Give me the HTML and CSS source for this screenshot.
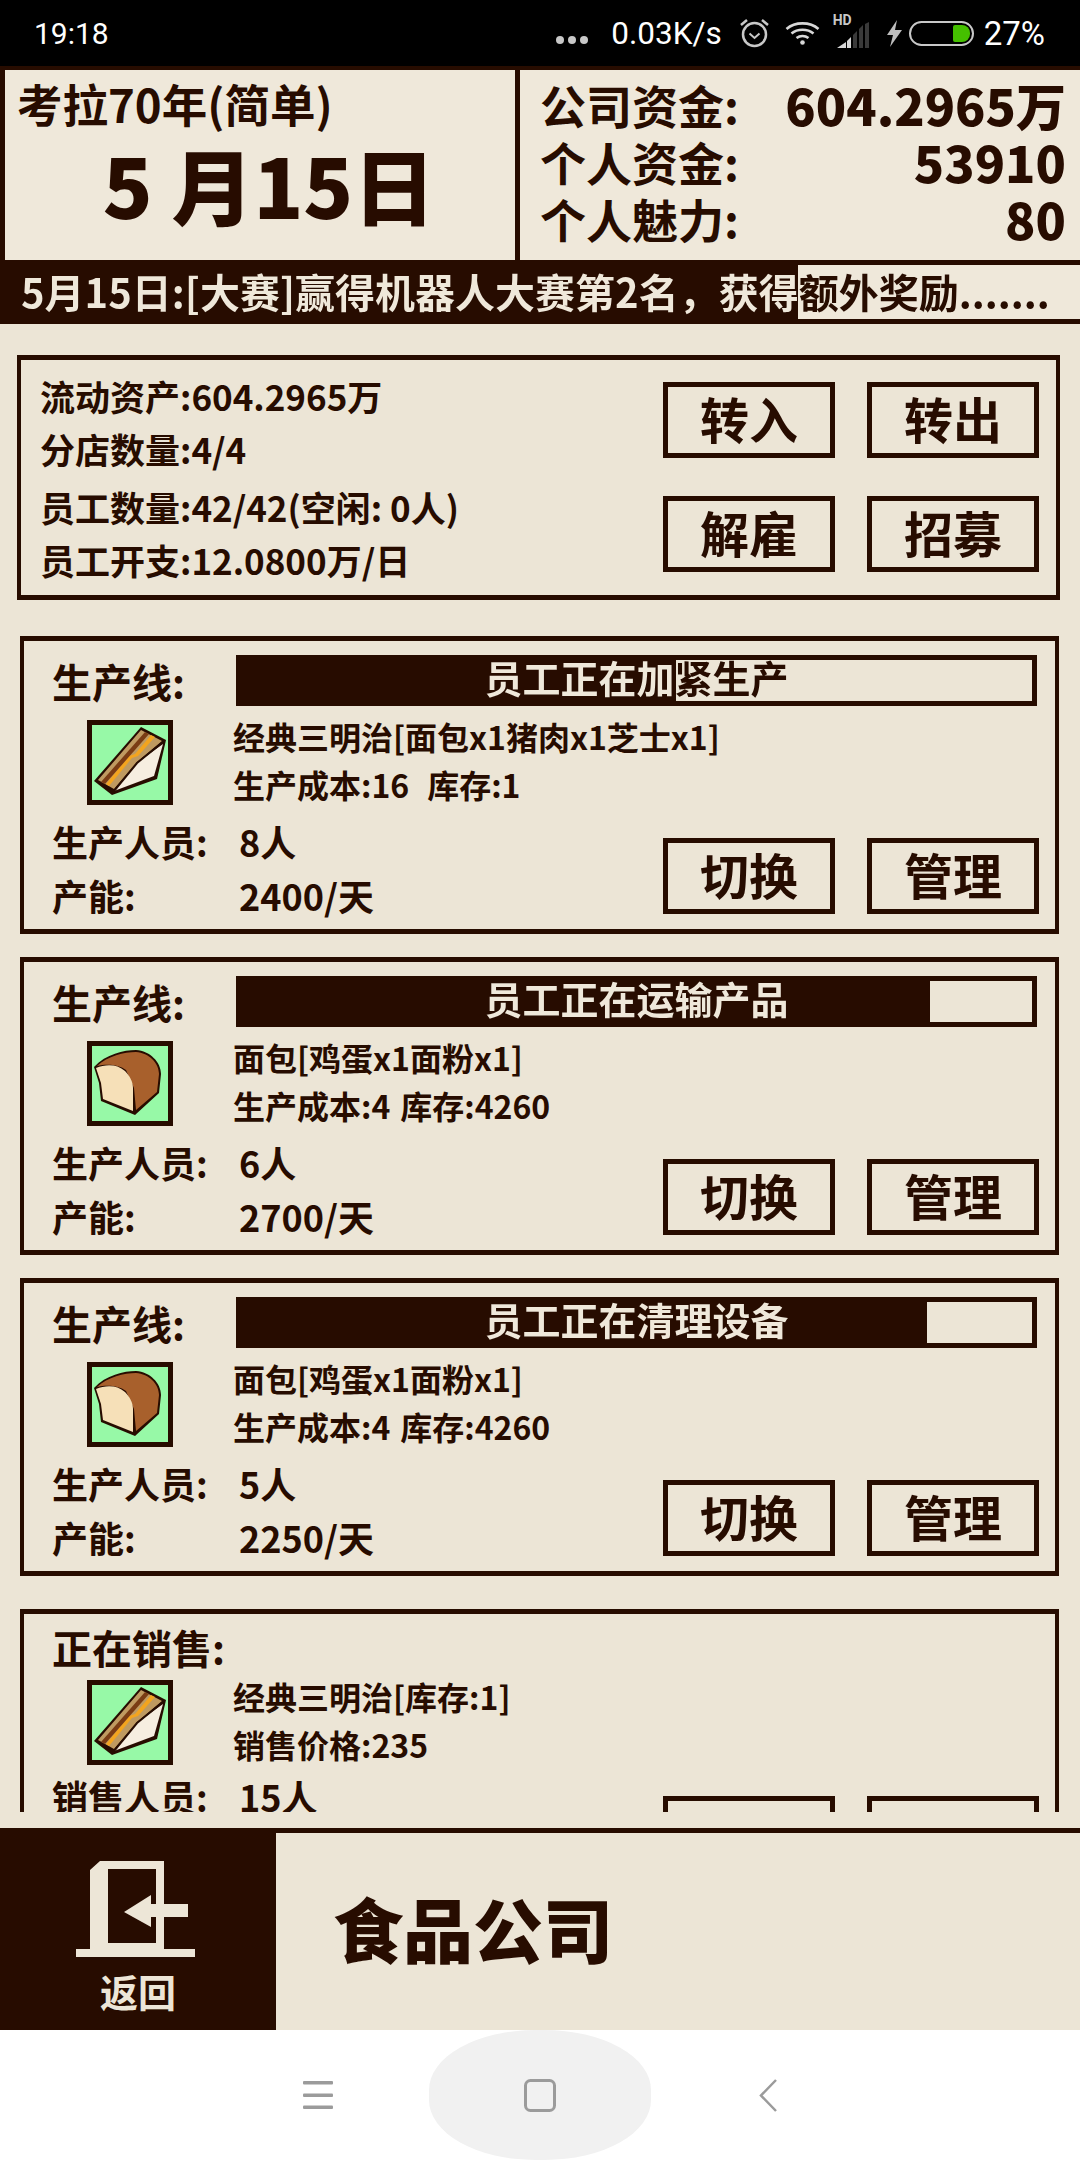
FILE: index.html
```html
<!DOCTYPE html>
<html lang="zh-CN">
<head>
    <meta charset="UTF-8">
    <meta name="viewport" content="width=device-width, initial-scale=1.0">
    <title>食品公司</title>
    <link rel="stylesheet" href="styles.css">
</head>
<body>
    <svg class="defs" width="0" height="0">
        <symbol id="sandwich" viewBox="0 0 76 75">
            <path d="M49 2 74 15 65 54 20 70 2 56Z" fill="#270c00"/>
            <path d="M71 19 62 51 22 66 43 39Z" fill="#f6eee0"/>
            <path d="M49 5 70 16 45 37 22 64 6 55Z" fill="#bf9a60"/>
            <path d="M59 10 63 12 46 31 40 33 17 61 14 59 37 31 43 29Z" fill="#f3a41f"/>
            <path d="M53 7 57 9 13 59 9 57Z" fill="#7a3c14"/>
            <path d="M71 17 45 38 22 66" fill="none" stroke="#270c00" stroke-width="2"/>
        </symbol>
        <symbol id="bread" viewBox="0 0 76 75">
            <path d="M2 21C14 8 32 4 44 4 58 5 69 16 69 28L67 47 43 69 9 55 7 37Z" fill="#270c00"/>
            <path d="M5 20C16 10 32 6 44 6 57 7 67 17 67 28L65 46 44 64 42 42 34 24C26 18 14 18 5 20Z" fill="#a8602c"/>
            <path d="M4 22C14 18 25 18 33 25 38 30 41 36 41 42L41 65 11 53 9 37Z" fill="#f6e0b8"/>
        </symbol>
    </svg>

    <!-- status bar -->
    <div class="status">
        <span class="clock">19:18</span>
        <div class="status-right">
            <span class="dots"><i></i><i></i><i></i></span>
            <span class="speed">0.03K/s</span>
            <svg class="ic-alarm" width="31" height="30" viewBox="0 0 31 30" fill="none" stroke="#c8c8c8" stroke-width="2.500">
                <circle cx="15.500" cy="16.500" r="11.500"/>
                <path d="M10.500 15.500 15.500 20 20.500 15.500" stroke-width="2"/>
                <path d="M2 7 8 2M29 7 23 2"/>
            </svg>
            <svg class="ic-wifi" width="35" height="24" viewBox="0 0 35 24" fill="none" stroke="#d8d8d8" stroke-width="2.600">
                <path d="M1.500 8C10 0.500 25 0.500 33.500 8"/>
                <path d="M6.500 12.500C12.500 7.500 22.500 7.500 28.500 12.500"/>
                <path d="M11.500 17C15 14.500 20 14.500 23.500 17"/>
                <circle cx="17.500" cy="21.500" r="2.300" fill="#d8d8d8" stroke="none"/>
            </svg>
            <span class="ic-signal">
                <b>HD</b>
                <svg width="36" height="26" viewBox="0 0 36 26">
                    <path d="M3 26 12 20V26Z" fill="#d8d8d8"/>
                    <path d="M13 19 17 15V26H13Z" fill="#d8d8d8"/>
                    <path d="M19 13 23 9V26H19ZM25 7 29 3V26H25ZM31 2 35 0V26H31Z" fill="#3a3a3a"/>
                </svg>
            </span>
            <svg class="ic-bolt" width="15" height="27" viewBox="0 0 15 27">
                <path d="M10 0 0 15H6L3 27 15 10H8Z" fill="#bdbdbd"/>
            </svg>
            <span class="battery"><i></i></span>
            <span class="percent">27%</span>
        </div>
    </div>

    <!-- date and money -->
    <div class="top">
        <div class="top-date">
            <div class="year">考拉70年(简单)</div>
            <div class="day">5 月15日</div>
        </div>
        <div class="top-money">
            <div class="money-row"><span>公司资金:</span><strong>604.2965万</strong></div>
            <div class="money-row"><span>个人资金:</span><strong>53910</strong></div>
            <div class="money-row"><span>个人魅力:</span><strong>80</strong></div>
        </div>
    </div>
    <div class="ticker" style="--p:73.9%">
        <div class="ticker-text">5月15日:[大赛]赢得机器人大赛第2名，获得额外奖励.......</div>
    </div>

    <!-- scrolling content -->
    <div class="content">
        <div class="box summary">
            <div class="summary-row">
                <div class="summary-text">
                    <p>流动资产:604.2965万</p>
                    <p>分店数量:4/4</p>
                </div>
                <div class="actions">
                    <button class="btn">转入</button>
                    <button class="btn">转出</button>
                </div>
            </div>
            <div class="summary-row">
                <div class="summary-text">
                    <p>员工数量:42/42(空闲: 0人)</p>
                    <p>员工开支:12.0800万/日</p>
                </div>
                <div class="actions">
                    <button class="btn">解雇</button>
                    <button class="btn">招募</button>
                </div>
            </div>
        </div>

        <div class="box line">
            <div class="line-head">
                <span class="line-label">生产线:</span>
                <div class="bar" style="--p:55%"><span class="bar-text">员工正在加紧生产</span></div>
            </div>
            <div class="line-item">
                <div class="thumb"><svg><use href="#sandwich"/></svg></div>
                <div class="item-text">
                    <p>经典三明治[面包x1猪肉x1芝士x1]</p>
                    <p>生产成本:16<span class="stock wide">库存:1</span></p>
                </div>
            </div>
            <div class="line-foot">
                <div class="stats">
                    <p><span>生产人员:</span>8人</p>
                    <p><span>产能:</span>2400/天</p>
                </div>
                <div class="actions">
                    <button class="btn">切换</button>
                    <button class="btn">管理</button>
                </div>
            </div>
        </div>

        <div class="box line">
            <div class="line-head">
                <span class="line-label">生产线:</span>
                <div class="bar" style="--p:87.1%"><span class="bar-text">员工正在运输产品</span></div>
            </div>
            <div class="line-item">
                <div class="thumb"><svg><use href="#bread"/></svg></div>
                <div class="item-text">
                    <p>面包[鸡蛋x1面粉x1]</p>
                    <p>生产成本:4<span class="stock">库存:4260</span></p>
                </div>
            </div>
            <div class="line-foot">
                <div class="stats">
                    <p><span>生产人员:</span>6人</p>
                    <p><span>产能:</span>2700/天</p>
                </div>
                <div class="actions">
                    <button class="btn">切换</button>
                    <button class="btn">管理</button>
                </div>
            </div>
        </div>

        <div class="box line">
            <div class="line-head">
                <span class="line-label">生产线:</span>
                <div class="bar" style="--p:86.7%"><span class="bar-text">员工正在清理设备</span></div>
            </div>
            <div class="line-item">
                <div class="thumb"><svg><use href="#bread"/></svg></div>
                <div class="item-text">
                    <p>面包[鸡蛋x1面粉x1]</p>
                    <p>生产成本:4<span class="stock">库存:4260</span></p>
                </div>
            </div>
            <div class="line-foot">
                <div class="stats">
                    <p><span>生产人员:</span>5人</p>
                    <p><span>产能:</span>2250/天</p>
                </div>
                <div class="actions">
                    <button class="btn">切换</button>
                    <button class="btn">管理</button>
                </div>
            </div>
        </div>

        <div class="box line sale">
            <div class="line-head">
                <span class="line-label">正在销售:</span>
            </div>
            <div class="line-item">
                <div class="thumb"><svg><use href="#sandwich"/></svg></div>
                <div class="item-text">
                    <p>经典三明治[库存:1]</p>
                    <p>销售价格:235</p>
                </div>
            </div>
            <div class="line-foot">
                <div class="stats">
                    <p><span>销售人员:</span>15人</p>
                </div>
                <div class="actions">
                    <button class="btn"></button>
                    <button class="btn"></button>
                </div>
            </div>
        </div>
    </div>

    <!-- bottom title -->
    <div class="footer">
        <div class="back">
            <svg width="119" height="96" viewBox="0 0 119 96" fill="#ede6d7">
                <path fill-rule="evenodd" d="M24 0H88V88H119V96H0V88H14V9ZM32 8V82H80V8Z"/>
                <path d="M48 51 75 34V43H112V56H75V66Z"/>
            </svg>
            <span>返回</span>
        </div>
        <div class="page-title">食品公司</div>
    </div>

    <!-- navigation bar -->
    <div class="nav">
        <div class="nav-item">
            <svg width="30" height="28" viewBox="0 0 30 28" fill="#9b9b9b">
                <rect y="0" width="30" height="3.500" rx="1"/>
                <rect y="12.500" width="30" height="3.500" rx="1"/>
                <rect y="24.500" width="30" height="3.500" rx="1"/>
            </svg>
        </div>
        <div class="nav-item nav-home">
            <svg width="32" height="33" viewBox="0 0 32 33" fill="none" stroke="#9b9b9b" stroke-width="3">
                <rect x="1.500" y="1.500" width="29" height="30" rx="5"/>
            </svg>
        </div>
        <div class="nav-item">
            <svg width="18" height="33" viewBox="0 0 18 33" fill="none" stroke="#9b9b9b" stroke-width="2.500">
                <path d="M17 1 2 16.500 17 32"/>
            </svg>
        </div>
    </div>
</body>
</html>
```
FILE: styles.css
```css
* {
    margin: 0;
    padding: 0;
    box-sizing: border-box;
}

body {
    width: 1080px;
    height: 2160px;
    overflow: hidden;
    display: flex;
    flex-direction: column;
    background: #ece5d6;
    color: #270c00;
    font-family: "Noto Sans CJK SC", "Noto Sans", sans-serif;
    font-weight: 700;
}

.defs {
    position: absolute;
}

/* status bar */
.status {
    height: 66px;
    flex: none;
    background: #000;
    color: #fff;
    display: flex;
    align-items: center;
    justify-content: space-between;
    padding: 0 35px 0 34px;
    font-family: Roboto, sans-serif;
    font-weight: 400;
    font-size: 30px;
}

.status-right {
    display: flex;
    align-items: center;
}

.dots {
    display: flex;
    gap: 4px;
    margin-top: 14px;
}

.dots i {
    width: 8px;
    height: 8px;
    border-radius: 50%;
    background: #c8c8c8;
}

.speed {
    margin-left: 23px;
    font-size: 31.500px;
}

.ic-alarm {
    margin-left: 17px;
}

.ic-wifi {
    margin-left: 15px;
}

.ic-signal {
    position: relative;
    margin-left: 14px;
    width: 36px;
    height: 26px;
}

.ic-signal b {
    position: absolute;
    left: -1px;
    top: -7px;
    font-size: 14px;
    line-height: 14px;
    color: #c8c8c8;
}

.ic-bolt {
    margin-left: 17px;
}

.battery {
    margin-left: 7px;
    width: 65px;
    height: 25px;
    border: 2px solid #c8c8c8;
    border-radius: 13px;
    display: flex;
    justify-content: flex-end;
    padding: 2px 2px;
}

.battery i {
    width: 17px;
    background: #45c000;
    border-radius: 2px 8px 8px 2px;
}

.percent {
    margin-left: 10px;
    font-size: 33px;
}

/* date and money */
.top {
    flex: none;
    height: 194px;
    display: grid;
    grid-template-columns: 510px 1fr;
    gap: 5px;
    padding: 4px 0 0 5px;
    background: #270c00;
}

.top-date,
.top-money {
    background: #efe8da;
}

.top-date {
    padding-left: 12px;
}

.year {
    font-size: 45.500px;
    line-height: 66px;
}

.day {
    font-size: 82px;
    font-weight: 900;
    line-height: 96px;
    text-align: center;
    padding-left: 6px;
}

.top-money {
    padding: 6px 14px 0 20px;
}

.money-row {
    display: flex;
    justify-content: space-between;
    align-items: center;
    height: 57px;
    font-size: 46px;
    line-height: 57px;
}

.money-row strong {
    font-size: 50px;
}

/* news line */
.ticker {
    flex: none;
    height: 64px;
    border-top: 5px solid #270c00;
    border-bottom: 5px solid #270c00;
    background: linear-gradient(to right, #270c00 var(--p), #efe8da var(--p));
}

.ticker-text,
.bar-text {
    color: transparent;
    -webkit-background-clip: text;
    background-clip: text;
    background-image: linear-gradient(to right, #efe8da var(--p), #270c00 var(--p));
}

.ticker-text {
    padding: 0 0 2px 21px;
    font-size: 40px;
    line-height: 52px;
    white-space: nowrap;
}

/* scroll area */
.content {
    height: 1488px;
    flex: none;
    overflow: hidden;
    padding-top: 31px;
}

.box {
    border: solid #270c00;
    border-width: 5px 4px;
}

.summary {
    margin: 0 20px 36px 17px;
    height: 245px;
    padding: 9px 17px 0 19px;
}

.summary-row {
    display: flex;
    justify-content: space-between;
}

.summary-row + .summary-row {
    margin-top: 5px;
}

.summary-row + .summary-row .actions {
    margin-top: 16px;
}

.summary-text {
    font-size: 35px;
    line-height: 53px;
}

.actions {
    display: flex;
    gap: 32px;
    margin-top: 13px;
}

.btn {
    width: 172px;
    height: 76px;
    padding-bottom: 5px;
    border: 5px solid #270c00;
    background: none;
    color: #270c00;
    font: inherit;
    font-size: 49px;
    line-height: 1;
}

/* production line */
.line {
    margin: 0 21px 23px 20px;
    height: 298px;
    padding: 14px 18px 0 28px;
}

.line-head {
    display: flex;
    align-items: center;
    height: 51px;
}

.line-label {
    width: 184px;
    flex: none;
    font-size: 40px;
}

.bar {
    flex: 1;
    height: 51px;
    border: 5px solid #270c00;
    background: linear-gradient(to right, #270c00 var(--p), transparent var(--p));
}

.bar-text {
    display: block;
    padding-bottom: 8px;
    text-align: center;
    font-size: 38px;
    line-height: 33px;
}

.line-item {
    display: flex;
    align-items: center;
    height: 85px;
    margin-top: 14px;
}

.thumb {
    width: 86px;
    height: 85px;
    margin-left: 35px;
    border: 5px solid #270c00;
    background: #97f9a7;
    flex: none;
}

.thumb svg {
    display: block;
    width: 100%;
    height: 100%;
}

.item-text {
    margin: -5px 0 0 60px;
    font-size: 32px;
    line-height: 48px;
}

.stock {
    margin-left: 10px;
}

.stock.wide {
    margin-left: 18px;
}

.line-foot {
    display: flex;
    justify-content: space-between;
    margin-top: 9px;
}

.stats {
    font-size: 36px;
    line-height: 54px;
}

.stats span {
    display: inline-block;
    width: 187px;
}

.line-foot .actions {
    margin: 24px -2px 0 0;
}

/* sale box */
.sale {
    margin-top: 33px;
}

.sale .line-head {
    height: 38px;
}

.sale .line-foot {
    margin-top: 4px;
}

.sale .line-foot .actions {
    margin-top: 27px;
}

/* footer */
.footer {
    flex: none;
    height: 202px;
    margin-top: 16px;
    border-top: 5px solid #270c00;
    display: flex;
    background: #ece5d6;
}

.back {
    width: 276px;
    background: #270c00;
    color: #ede6d7;
    display: flex;
    flex-direction: column;
    align-items: center;
    padding-top: 28px;
    font-size: 38px;
    line-height: 52px;
}

.back svg {
    margin-right: 6px;
}

.back span {
    margin-top: 8px;
}

.page-title {
    padding-left: 57px;
    font-size: 70px;
    font-weight: 900;
    line-height: 189px;
}

/* navigation bar */
.nav {
    flex: none;
    height: 130px;
    background: #fff;
    display: grid;
    grid-template-columns: 222px 222px 234px;
    padding-left: 207px;
}

.nav-item {
    display: flex;
    align-items: center;
    justify-content: center;
}

.nav-home {
    background: #f1f1f1;
    border-radius: 48% / 46%;
}
```
